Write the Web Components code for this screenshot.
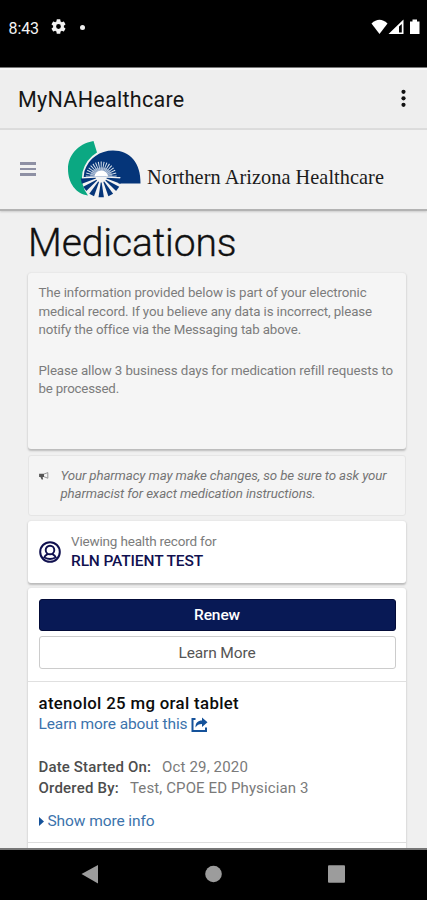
<!DOCTYPE html>
<html lang="en">
<head>
<meta charset="utf-8">
<title>MyNAHealthcare</title>
<style>
html,body{margin:0;padding:0;background:#f0f0f0;overflow:hidden}
body{width:427px;height:900px;font-family:Roboto,"Liberation Sans",sans-serif;color:#6c6c6c}
</style>
</head>
<body>
<phone-screen></phone-screen>
<script>
const define=(name,html,setup)=>customElements.define(name,class extends HTMLElement{
  constructor(){
    super();
    this.attachShadow({mode:'open'}).innerHTML=html;
  }
  connectedCallback(){ if(setup) setup(this); }
});

/* One line of text, tracked so that it fills the width given in "w". */
define('fit-text','<style>:host{display:block;white-space:nowrap;width:max-content}span{display:inline-block}</style><span><slot></slot></span>',el=>{
  const span=el.shadowRoot.querySelector('span');
  const n=el.textContent.length, w=+el.getAttribute('w');
  span.style.letterSpacing='0px';
  const natural=span.getBoundingClientRect().width;
  if(w&&natural) span.style.letterSpacing=((w-natural)/n)+'px';
});

define('status-bar',`<style>
:host{display:flex;box-sizing:border-box;height:67px;background:#000;color:#f4f4f4;padding:18px 6px 0 8.500px;align-items:flex-start;font-size:16px;line-height:19px}
svg{display:block}.gear{margin:1px 0 0 12px}.dot{margin:7px 0 0 14px;width:5px;height:5px;border-radius:50%;background:#eee}
fit-text{margin-top:1px}
.right{margin-left:auto;display:flex;padding-top:1px}
</style>
<fit-text w="30.500">8:43</fit-text>
<svg class="gear" width="15" height="15" viewBox="2 2 20 20" preserveAspectRatio="none"><path fill="#f2f2f2" fill-rule="evenodd" d="M19.140 12.940c.04-.3.06-.61.06-.94s-.02-.64-.07-.94l2.030-1.580a.49.49 0 0 0 .12-.61l-1.920-3.320a.49.49 0 0 0-.59-.22l-2.390.96a7 7 0 0 0-1.620-.94l-.36-2.540A.48.48 0 0 0 13.920 2.400h-3.840a.47.47 0 0 0-.47.41l-.36 2.540c-.59.24-1.130.57-1.620.94l-2.390-.96a.48.48 0 0 0-.59.22L2.740 8.870a.48.48 0 0 0 .12.61l2.030 1.580c-.05.3-.09.63-.09.94s.02.64.07.94l-2.030 1.580a.49.49 0 0 0-.12.61l1.920 3.320c.12.22.37.29.59.22l2.390-.96c.5.38 1.030.7 1.620.94l.36 2.540c.05.24.24.41.48.41h3.840c.24 0 .44-.17.47-.41l.36-2.540a7 7 0 0 0 1.620-.94l2.390.96c.22.08.47 0 .59-.22l1.920-3.320a.47.47 0 0 0-.12-.61zM12 15.200a3.200 3.200 0 1 1 0-6.400 3.200 3.200 0 0 1 0 6.400z"/></svg>
<div class="dot"></div>
<div class="right"><svg width="50" height="16" viewBox="371 19 50 16"><path fill="#fff" d="M371.500 23.500Q379.500 16 387.500 23.500L379.500 34z"/><path fill="#fff" fill-rule="evenodd" d="M388.500 34L403.500 19.500V34zM399 26.500V32.500H401.800V24z"/><path fill="#fff" d="M410 21.500H412.500V19.500H417V21.500H419.500V34H410z"/></svg></div>`);

define('app-bar',`<style>
:host{display:flex;box-sizing:border-box;height:63px;background:linear-gradient(#777 0 1px,#f8f8f8 1px 3px,#eee 3px);border-bottom:2px solid #dcdcdc;padding:0 20px 0 18px;align-items:center;justify-content:space-between;color:#161616;font-size:21.500px;line-height:24px}
fit-text{margin-top:5px}svg{display:block}
</style><fit-text w="166.500">MyNAHealthcare</fit-text><svg width="7" height="20" viewBox="0 0 7 20"><g fill="#111"><circle cx="3.500" cy="3.800" r="2.100"/><circle cx="3.500" cy="10.300" r="2.100"/><circle cx="3.500" cy="16.800" r="2.100"/></g></svg>`);

define('nah-logo',`<style>:host{display:block}svg{display:block}</style><svg width="76" height="60" viewBox="67 139 76 60">
<path fill="#0ba882" d="M93.500 141C77 144 68 156 68 169C68 183 76 194 88 195.500Q80 185 82.500 172Q86 159 97 152.500Z"/>
<path fill="#053579" d="M84.500 171C89 158 100 150.500 113 150.500C130 150.500 141 163 140.500 183.500H116L100 177L83.500 178Z"/>
<g id="rays"></g>
</svg>`,el=>{
  const p=(r,a)=>{const t=a*Math.PI/180;return (101.2+r*Math.cos(t)).toFixed(2)+' '+(177+r*Math.sin(t)).toFixed(2)};
  let s='<path fill="#f3f3f3" d="M83 177H120.500A19 21 0 0 1 83 177Z"/>';
  for(let a=184;a<360;a+=10.750) s+=`<path fill="#dfe7f0" d="M${p(5,a-3)}L${p(15.5,a-2)}L${p(15.500,a+2)}L${p(5,a+3)}Z"/>`;
  s+='<path fill="#aebfd7" d="M90 177A11 9.500 0 0 1 112.500 177Z" opacity=".7"/><path fill="#fff" d="M94.500 176.500A6.700 6 0 0 1 108 176.500Z"/>';
  for(const a of [12,36,62,90,118,144,168]) s+=`<path fill="#053579" d="M${p(5.500,a-5)}L${p(20.500,a-7.500)}L${p(20.500,a+7.500)}L${p(5.500,a+5)}Z"/>`;
  el.shadowRoot.querySelector('#rays').innerHTML=s;
});

define('site-header',`<style>
:host{display:flex;box-sizing:border-box;height:81px;background:#f2f2f2;border-bottom:2px solid #b3b3b3;padding:9px 0 0 20px;color:#1c1c1c;box-shadow:0 1px 2px #ccc}
.menu{display:grid;gap:3.200px;width:16px;height:max-content;margin:23px 31px 0 0}.menu i{height:2.500px;background:#8e90a4}
fit-text{font:20.300px/24px "Liberation Serif",serif;margin:26px 0 0 4px}
</style><div class="menu"><i></i><i></i><i></i></div><nah-logo></nah-logo><fit-text w="237">Northern Arizona Healthcare</fit-text>`);

define('ui-card',`<style>:host{display:block;box-sizing:border-box;border-radius:3px;background:#fff;box-shadow:0 1.500px 2px #bbb,0 0 2px #ddd}:host([muted]){background:#f5f5f5}:host([flat]){box-shadow:none;border:1.500px solid #e5e5e5;background:#f4f4f4}</style><slot></slot>`);

define('ui-button',`<style>:host{display:flex;box-sizing:border-box;height:33px;border:1px solid #ccc;border-radius:3px;align-items:center;justify-content:center;font-size:15.500px;color:#555}:host([primary]){height:32px;background:#081955;border-color:#030b38;color:#fff;font-weight:500}</style><slot></slot>`);

define('data-row',`<style>:host{display:flex;gap:11px;height:21.500px;line-height:21.500px;font-size:15px;color:#7a7a7a}::slotted([slot=label]){font-weight:500;color:#4d4d4d}</style><slot name="label"></slot><slot></slot>`);

define('medication-item',`<style>
:host{display:block;box-sizing:border-box;height:162px;border-top:1.500px solid #e0e0e0;border-bottom:1.500px solid #ddd;padding:11px 10.500px 0}
.name{font-size:16.800px;font-weight:500;color:#0c0c0c;line-height:21px}
.link{display:flex;font-size:15.500px;line-height:21px;color:#3c73ac}
svg{display:block}.link svg{margin:3px 0 0 3px}.rows{margin:22px 0 11px}.link.more svg{margin:6px 4px 0 0}
</style>
<fit-text class="name" w="200.500">atenolol 25 mg oral tablet</fit-text>
<div class="link"><fit-text w="149">Learn more about this</fit-text><svg width="17" height="16" viewBox="0 0 17 16"><path fill="none" stroke="#15529a" stroke-width="2" d="M4.500 2H1.500V14H15V10.500"/><path fill="#15529a" d="M4.500 10.500C4.500 5.500 7 3.500 11 3.500V.5L16.500 5.300L11 10V7C8 7 6 8 4.500 10.500Z"/></svg></div>
<div class="rows"><data-row><fit-text slot="label" w="112.500">Date Started On:</fit-text><fit-text w="86">Oct 29, 2020</fit-text></data-row>
<data-row><fit-text slot="label" w="80.500">Ordered By:</fit-text><fit-text w="178.500">Test, CPOE ED Physician 3</fit-text></data-row></div>
<div class="link more"><svg width="5" height="9" viewBox="0 0 5 9"><path fill="#15529a" d="M0 0L5 4.500L0 9Z"/></svg><fit-text w="107">Show more info</fit-text></div>`);

define('medications-page',`<style>
:host{display:block;box-sizing:border-box;height:637px;overflow:hidden;padding:0 21px 0 28px}
.title{font-size:39px;line-height:44px;color:#111;font-weight:300;-webkit-text-stroke:.35px #111;padding:10px 0 8px}
ui-card{margin-bottom:6px}
.info{height:176px;padding:11px 10.500px;font-size:13.300px;line-height:18.500px;color:#7c7c7c}.gap{height:22px}
.notice{display:flex;height:61px;padding:10.500px 9px;font-size:13.300px;line-height:18.500px;font-style:italic;color:#747474}
.notice svg{margin:5px 11.500px 0 1px}
ui-card.notice{margin-bottom:5px}
.who{display:flex;align-items:center;height:62px;padding:0 10.500px}ui-card.who{margin-bottom:5px}
.who svg{margin:0 10.500px 0 0}.v{font-size:13.500px;line-height:20px;color:#7c7c7c}.n{font-size:15.500px;line-height:20px;font-weight:500;color:#10104f}
.who div{padding-bottom:3px}.list{height:270px}.actions{display:grid;gap:5.500px;padding:10.700px 10.500px 11.800px;height:70.500px}
svg{display:block;flex:none}
</style>
<fit-text class="title" w="208.500">Medications</fit-text>
<ui-card muted class="info"><fit-text w="328">The information provided below is part of your electronic</fit-text><fit-text w="333.500">medical record. If you believe any data is incorrect, please</fit-text><fit-text w="261.500">notify the office via the Messaging tab above.</fit-text><div class="gap"></div><fit-text w="354">Please allow 3 business days for medication refill requests to</fit-text><fit-text w="80.500">be processed.</fit-text></ui-card>
<ui-card flat class="notice"><svg width="10" height="8" viewBox="0 0 11 9"><path fill="#555" d="M0 2H5.500V5.500H4L4.500 8.500H2.800L1.500 5.500H0Z"/><path fill="none" stroke="#888" stroke-width="1" d="M5.500 2.300L9.800.700V7L5.500 5.300"/></svg><div><fit-text w="326">Your pharmacy may make changes, so be sure to ask your</fit-text><fit-text w="255">pharmacist for exact medication instructions.</fit-text></div></ui-card>
<ui-card class="who"><svg width="22" height="22" viewBox="0 0 22 22"><g fill="none" stroke="#10104f"><circle cx="11" cy="11" r="9.800" stroke-width="2"/><circle cx="11" cy="9" r="4.300" stroke-width="1.900"/><path stroke-width="1.900" d="M4.800 17.200C5.500 14.500 7 13.800 9 12.800M17.200 17.200C16.500 14.500 15 13.800 13 12.800M5.500 16.500Q11 19.500 16.500 16.500"/></g></svg><div><fit-text class="v" w="145.500">Viewing health record for</fit-text><fit-text class="n" w="132">RLN PATIENT TEST</fit-text></div></ui-card>
<ui-card class="list"><div class="actions"><ui-button primary><fit-text w="46">Renew</fit-text></ui-button><ui-button><fit-text w="77">Learn More</fit-text></ui-button></div><medication-item></medication-item></ui-card>`);

define('nav-bar',`<style>:host{display:flex;box-sizing:border-box;height:52px;background:#000;border-top:2px solid #777;padding:14px 82px 0 81px;justify-content:space-between}svg{display:block}</style>
<svg width="18" height="20" viewBox="0 0 18 20"><path fill="#9c9c9c" d="M.5 10L17 1V19.500Z"/></svg><svg width="17" height="20" viewBox="0 0 17 20"><circle fill="#9c9c9c" cx="8.500" cy="10" r="8.300"/></svg><svg width="17" height="20" viewBox="0 0 17 20"><rect fill="#9c9c9c" y="1.300" width="17" height="17.400" rx="1"/></svg>`);

define('phone-screen',`<style>:host{display:flex;flex-direction:column;width:427px;height:900px}status-bar,app-bar,site-header,medications-page,nav-bar{flex:none}</style>
<status-bar></status-bar><app-bar></app-bar><site-header></site-header><medications-page></medications-page><nav-bar></nav-bar>`);
</script>
</body>
</html>
